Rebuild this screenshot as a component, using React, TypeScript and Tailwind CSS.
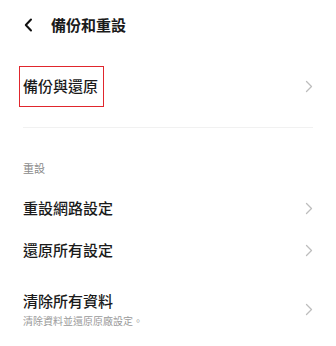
import React from "react";

const font = { fontFamily: '"Noto Sans CJK TC", "Noto Sans", sans-serif' };

function ChevronRight() {
  return (
    <svg width="8" height="13" viewBox="0 0 8 13" fill="none" className="shrink-0">
      <path d="M1.5 1.5 L6.5 6.5 L1.5 11.5" stroke="#bdbdbd" strokeWidth="1.3" strokeLinecap="round" strokeLinejoin="round" />
    </svg>
  );
}

export default function App() {
  return (
    <div className="w-[336px] h-[346px] bg-white text-[#1a1a1a] overflow-hidden" style={font}>
      <div className="h-[50px] flex items-center pl-[24px]">
        <svg width="9" height="14" viewBox="0 0 9 14" fill="none" className="shrink-0">
          <path d="M7 1.5 L1.8 7 L7 12.5" stroke="#111" strokeWidth="2" strokeLinecap="round" strokeLinejoin="round" />
        </svg>
        <span className="ml-[18px] text-[15px] leading-[20px] font-bold">備份和重設</span>
      </div>

      <div className="h-[72px] flex items-center justify-between px-[23px]">
        <span className="relative text-[15px] leading-[20px] font-medium">
          備份與還原
          <span className="absolute -left-[4px] -right-[6px] -top-[10px] -bottom-[11px] border-[1.5px] border-[#e0262d]" />
        </span>
        <ChevronRight />
      </div>

      <div className="mt-[5px] mx-[23px] h-px bg-[#f1f1f1]" />

      <div className="pt-[33px] px-[23px] text-[11px] leading-[14px] text-[#8a8a8a]">重設</div>

      <div className="mt-[12px] h-[42px] flex items-center justify-between px-[23px]">
        <span className="text-[15px] leading-[20px] font-medium">重設網路設定</span>
        <ChevronRight />
      </div>

      <div className="h-[42px] flex items-center justify-between px-[23px]">
        <span className="text-[15px] leading-[20px] font-medium">還原所有設定</span>
        <ChevronRight />
      </div>

      <div className="pt-[20px] flex items-center justify-between px-[23px]">
        <div className="flex flex-col">
          <span className="text-[15px] leading-[20px] font-medium">清除所有資料</span>
          <span className="mt-[3px] text-[10px] leading-[13px] text-[#9a9a9a]">清除資料並還原原廠設定。</span>
        </div>
        <ChevronRight />
      </div>
    </div>
  );
}
